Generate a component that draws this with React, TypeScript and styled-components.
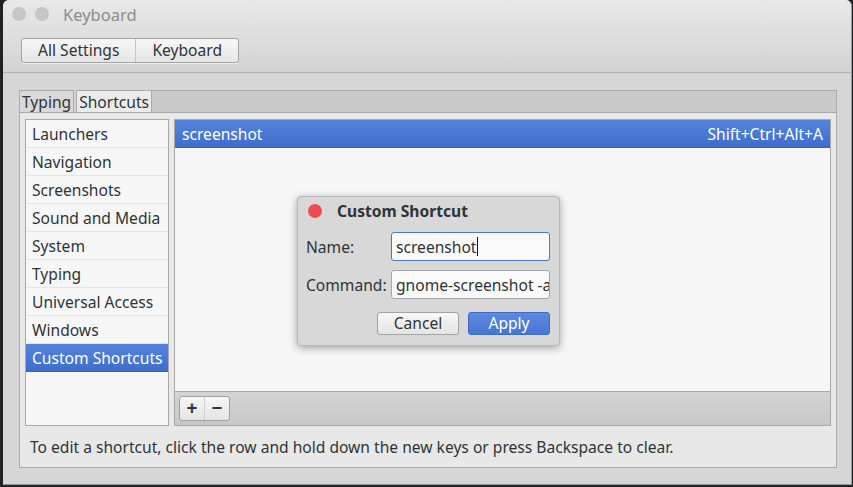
import React from "react";
import styled, { createGlobalStyle } from "styled-components";

const GlobalStyle = createGlobalStyle`
  html, body {
    margin: 0;
    padding: 0;
    background: #1f2326;
  }
  body {
    font-family: "Noto Sans", "Open Sans", sans-serif;
    font-size: 15.6px;
    color: #2e3436;
  }
`;

const categories = [
  "Launchers",
  "Navigation",
  "Screenshots",
  "Sound and Media",
  "System",
  "Typing",
  "Universal Access",
  "Windows",
  "Custom Shortcuts",
];

const App: React.FC = () => {
  return (
    <>
      <GlobalStyle />
      <Screen>
        <Window>
          <Header>
            <TitleRow>
              <Dots>
                <Dot />
                <Dot />
              </Dots>
              <Title>Keyboard</Title>
            </TitleRow>
            <Crumbs>
              <Crumb>All Settings</Crumb>
              <Crumb>Keyboard</Crumb>
            </Crumbs>
          </Header>
          <Body>
            <TabStrip>
              <Tab>Typing</Tab>
              <Tab active>Shortcuts</Tab>
              <TabFill />
            </TabStrip>
            <Page>
              <Columns>
                <CategoryList>
                  {categories.map((c, i) => (
                    <Category key={c} selected={i === categories.length - 1}>
                      {c}
                    </Category>
                  ))}
                </CategoryList>
                <ShortcutPanel>
                  <ShortcutList>
                    <ShortcutRow>
                      <span>screenshot</span>
                      <span>Shift+Ctrl+Alt+A</span>
                    </ShortcutRow>
                  </ShortcutList>
                  <Toolbar>
                    <ToolGroup>
                      <ToolButton>+</ToolButton>
                      <ToolButton>−</ToolButton>
                    </ToolGroup>
                  </Toolbar>
                </ShortcutPanel>
              </Columns>
              <Hint>
                To edit a shortcut, click the row and hold down the new keys or press Backspace to clear.
              </Hint>
            </Page>
          </Body>
        </Window>

        <Dialog>
          <DialogTitle>
            <CloseDot />
            <span>Custom Shortcut</span>
          </DialogTitle>
          <Form>
            <FieldLabel>Name:</FieldLabel>
            <Field focused>
              screenshot<Caret />
            </Field>
            <FieldLabel>Command:</FieldLabel>
            <Field>gnome-screenshot -a</Field>
          </Form>
          <Actions>
            <DialogButton>Cancel</DialogButton>
            <DialogButton primary>Apply</DialogButton>
          </Actions>
        </Dialog>
      </Screen>
    </>
  );
};

export default App;

const Screen = styled.div`
  position: relative;
  width: 853px;
  height: 487px;
  overflow: hidden;
  padding-left: 3px;
  box-sizing: border-box;
`;

const Window = styled.div`
  width: 849px;
  height: 485px;
  background: #d6d6d6;
  border-radius: 6px 6px 0 0;
  display: flex;
  flex-direction: column;
  overflow: hidden;
  border-right: 1px solid #9a9a9a;
  border-bottom: 1px solid #9a9a9a;
  box-sizing: border-box;
`;

const Header = styled.div`
  height: 73px;
  box-sizing: border-box;
  background: linear-gradient(#e9e9e9, #d3d3d3);
  border-bottom: 1px solid #b2b2b2;
  padding: 5px 0 0 9px;
  display: flex;
  flex-direction: column;
`;

const TitleRow = styled.div`
  display: flex;
  align-items: center;
  height: 18px;
`;

const Dots = styled.div`
  display: flex;
  gap: 9px;
  margin-right: 14px;
`;

const Dot = styled.div`
  width: 14px;
  height: 14px;
  border-radius: 50%;
  background: #c6c6c6;
`;

const Title = styled.div`
  color: #8c8c8c;
  font-size: 16.5px;
`;

const Crumbs = styled.div`
  display: flex;
  margin: 15px 0 0 9px;
  align-self: flex-start;
  border: 1px solid #a3a3a3;
  border-radius: 3px;
  background: linear-gradient(#f7f7f7, #e6e6e6);
  box-shadow: 0 1px 0 rgba(255, 255, 255, 0.6);
`;

const Crumb = styled.div`
  height: 23px;
  line-height: 23px;
  padding: 0 16px;
  color: #2e3436;
  & + & {
    border-left: 1px solid #c6c6c6;
  }
`;

const Body = styled.div`
  flex: 1;
  padding: 17px 14px 16px 16px;
  display: flex;
  flex-direction: column;
`;

const TabStrip = styled.div`
  display: flex;
  height: 22px;
  align-items: stretch;
`;

const Tab = styled.div<{ active?: boolean }>`
  padding: 0 2px;
  line-height: 22px;
  border: 1px solid #aaaaaa;
  border-bottom: none;
  margin-right: ${(p) => (p.active ? "0" : "2px")};
  background: ${(p) => (p.active ? "#ececec" : "#d9d9d9")};
  color: #2e3436;
`;

const TabFill = styled.div`
  flex: 1;
  background: #cacaca;
  border: 1px solid #aaaaaa;
  border-bottom: none;
  border-left: none;
`;

const Page = styled.div`
  flex: 1;
  background: #e8e8e8;
  border: 1px solid #aaaaaa;
  padding: 6px 5px 0 5px;
  display: flex;
  flex-direction: column;
`;

const Columns = styled.div`
  display: flex;
  gap: 5px;
  height: 307px;
`;

const CategoryList = styled.div`
  width: 144px;
  box-sizing: border-box;
  background: #f7f7f7;
  border: 1px solid #a8a8a8;
  display: flex;
  flex-direction: column;
`;

const Category = styled.div<{ selected?: boolean }>`
  height: 28px;
  line-height: 28px;
  padding-left: 6px;
  box-sizing: border-box;
  border-bottom: 1px solid ${(p) => (p.selected ? "#3464c0" : "#e6e6e6")};
  white-space: nowrap;
  color: ${(p) => (p.selected ? "#ffffff" : "#2e3436")};
  background: ${(p) => (p.selected ? "linear-gradient(#5583dd, #3f6dcc)" : "transparent")};
`;

const ShortcutPanel = styled.div`
  flex: 1;
  display: flex;
  flex-direction: column;
  border: 1px solid #a8a8a8;
`;

const ShortcutList = styled.div`
  flex: 1;
  background: #f7f7f7;
  border-bottom: 1px solid #aaaaaa;
`;

const ShortcutRow = styled.div`
  height: 27px;
  display: flex;
  align-items: center;
  justify-content: space-between;
  padding: 0 7px 0 7px;
  color: #ffffff;
  background: linear-gradient(#5583dd, #3f6dcc);
  border-bottom: 1px solid #3464c0;
`;

const Toolbar = styled.div`
  height: 33px;
  background: linear-gradient(#d4d4d4, #c8c8c8);
  display: flex;
  align-items: center;
  padding-left: 4px;
`;

const ToolGroup = styled.div`
  display: flex;
  border: 1px solid #a0a0a0;
  border-radius: 3px;
  background: linear-gradient(#f7f7f7, #e4e4e4);
`;

const ToolButton = styled.div`
  width: 24px;
  height: 23px;
  line-height: 22px;
  text-align: center;
  font-size: 19px;
  font-weight: bold;
  color: #2e3436;
  & + & {
    border-left: 1px solid #cfcfcf;
  }
`;

const Hint = styled.div`
  flex: 1;
  display: flex;
  align-items: center;
  padding-left: 5px;
  padding-top: 1px;
  color: #2e3436;
`;

const Dialog = styled.div`
  position: absolute;
  left: 297px;
  top: 196px;
  width: 263px;
  height: 150px;
  box-sizing: border-box;
  background: #d8d8d8;
  border: 1px solid #b8b8b8;
  border-radius: 4px;
  box-shadow: 0 2px 8px rgba(0, 0, 0, 0.35);
  padding: 0 9px 0 8px;
  display: flex;
  flex-direction: column;
`;

const DialogTitle = styled.div`
  height: 27px;
  display: flex;
  align-items: center;
  gap: 15px;
  padding-left: 2px;
  font-weight: bold;
  color: #2e3436;
`;

const CloseDot = styled.div`
  width: 14px;
  height: 14px;
  border-radius: 50%;
  background: #ee4b55;
`;

const Form = styled.div`
  display: grid;
  grid-template-columns: 85px 1fr;
  row-gap: 9px;
  align-items: center;
  margin-top: 8px;
`;

const FieldLabel = styled.div`
  color: #2e3436;
`;

const Field = styled.div<{ focused?: boolean }>`
  height: 29px;
  box-sizing: border-box;
  border: 1px solid ${(p) => (p.focused ? "#4a78c8" : "#a5a5a5")};
  border-radius: 3px;
  background: #fafafa;
  padding-left: 4px;
  white-space: nowrap;
  overflow: hidden;
  color: #2e3436;
  display: flex;
  align-items: center;
`;

const Caret = styled.span`
  display: inline-block;
  flex-shrink: 0;
  width: 1px;
  height: 19px;
  background: #111;
  margin-left: 1px;
`;

const Actions = styled.div`
  display: flex;
  justify-content: flex-end;
  gap: 9px;
  margin-top: 13px;
`;

const DialogButton = styled.div<{ primary?: boolean }>`
  width: 82px;
  height: 23px;
  box-sizing: border-box;
  line-height: 21px;
  text-align: center;
  border-radius: 3px;
  border: 1px solid ${(p) => (p.primary ? "#3e6bc4" : "#a3a3a3")};
  color: ${(p) => (p.primary ? "#ffffff" : "#2e3436")};
  background: ${(p) =>
    p.primary ? "linear-gradient(#5d8ae0, #4675d2)" : "linear-gradient(#f8f8f8, #e4e4e4)"};
`;
